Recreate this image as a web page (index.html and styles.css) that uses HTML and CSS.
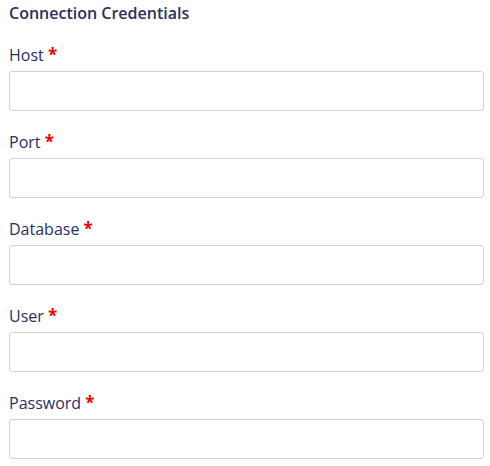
FILE: index.html
```html
<!DOCTYPE html>
<html>
<head>
<meta charset="utf-8">
<link rel="stylesheet" href="styles.css">
</head>
<body>
<div class="form">
  <h2 class="title">Connection Credentials</h2>
  <div class="field">
    <label class="label">Host <span class="req">*</span></label>
    <input class="input" type="text">
  </div>
  <div class="field">
    <label class="label">Port <span class="req">*</span></label>
    <input class="input" type="text">
  </div>
  <div class="field">
    <label class="label">Database <span class="req">*</span></label>
    <input class="input" type="text">
  </div>
  <div class="field">
    <label class="label">User <span class="req">*</span></label>
    <input class="input" type="text">
  </div>
  <div class="field">
    <label class="label">Password <span class="req">*</span></label>
    <input class="input" type="password">
  </div>
</div>
</body>
</html>
```
FILE: styles.css
```css
html, body {
  margin: 0;
  padding: 0;
  background: #fff;
}
body {
  font-family: "Open Sans", "Noto Sans", sans-serif;
  color: #2a2f5e;
}
.form {
  padding: 1px 6px 0 9px;
  display: flex;
  flex-direction: column;
}
.title {
  margin: 0 0 18px 0;
  font-size: 16px;
  font-weight: 600;
  line-height: 24px;
}
.field {
  display: flex;
  flex-direction: column;
  margin-bottom: 19px;
}
.label {
  font-size: 16px;
  line-height: 24px;
  margin-bottom: 4px;
}
.req {
  color: #f00000;
  font-weight: 700;
  font-size: 17px;
}
.input {
  box-sizing: border-box;
  height: 40px;
  width: 100%;
  margin: 0;
  border: 1px solid #cdd3dc;
  border-radius: 3px;
  background: #fff;
  outline: none;
}
```
